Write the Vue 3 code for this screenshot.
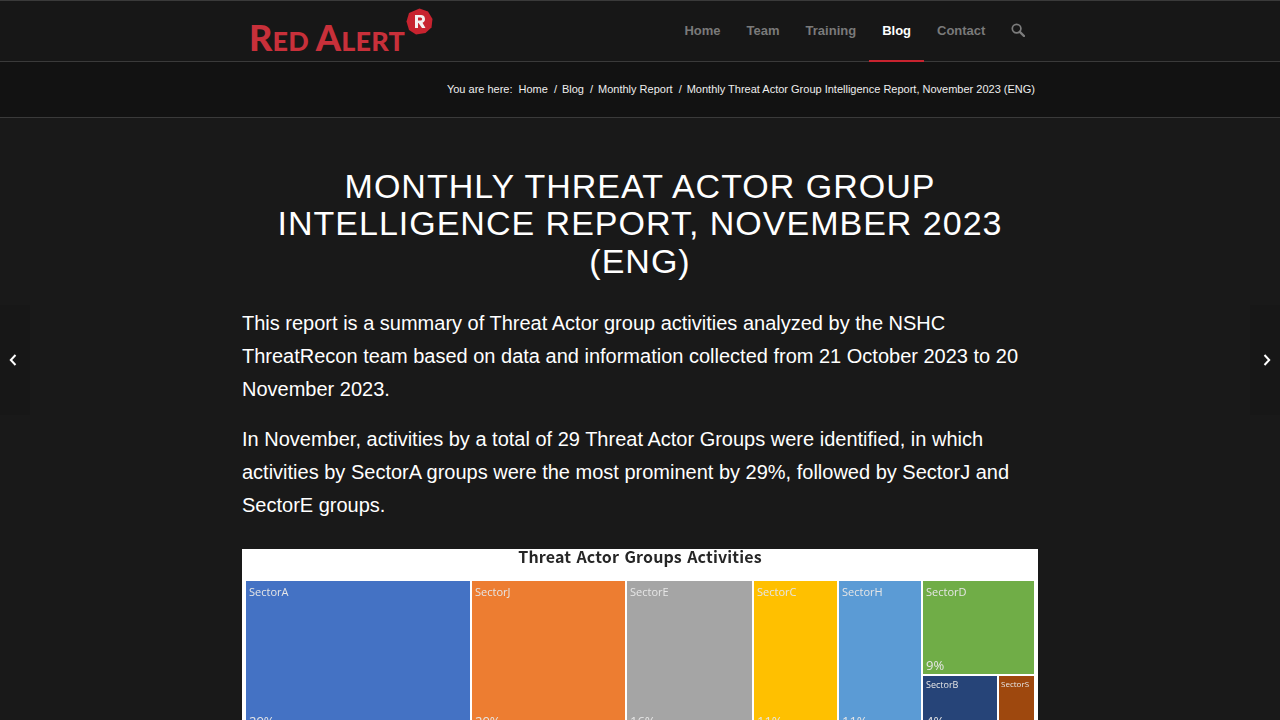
<script setup>
const navItems = [
  { label: 'Home' },
  { label: 'Team' },
  { label: 'Training' },
  { label: 'Blog', active: true },
  { label: 'Contact' },
]

const crumbs = ['Home', 'Blog', 'Monthly Report']

const columns = [
  { name: 'SectorA', pct: '29%', color: '#4472c4', width: 224 },
  { name: 'SectorJ', pct: '20%', color: '#ed7d31', width: 153 },
  { name: 'SectorE', pct: '16%', color: '#a5a5a5', width: 125 },
  { name: 'SectorC', pct: '11%', color: '#ffc000', width: 83 },
  { name: 'SectorH', pct: '11%', color: '#5b9bd5', width: 82 },
]
</script>

<template>
  <div class="page">
    <header class="topbar">
      <div class="topbar-inner">
        <a class="logo">
          <span class="logo-text"><span class="big">R</span>ED <span class="big">A</span>LERT</span>
          <svg class="logo-badge" width="27" height="27" viewBox="0 0 27 27">
            <path d="M13.5 0.5 L22 3.5 L26.5 11 L25.5 19.5 L19.5 25 L10 26.5 L3 22 L0.5 13.5 L3 5 Z" fill="#c8232f" />
            <path d="M9 20V7h6a4 4 0 0 1 1.5 7.7L19.5 20H16l-3.5-5H12v5z" fill="#f4f0f0" />
            <path d="M12 9.5v3h2.6a1.5 1.5 0 0 0 0-3z" fill="#c8232f" />
          </svg>
        </a>
        <nav class="nav">
          <a v-for="item in navItems" :key="item.label" class="nav-link" :class="{ active: item.active }">{{ item.label }}</a>
          <a class="nav-search">
            <svg width="14" height="14" viewBox="0 0 14 14" fill="none" stroke="#7c7c7c">
              <circle cx="5.6" cy="5.6" r="4.3" stroke-width="1.7" />
              <path d="M8.8 8.8 L13 13" stroke-width="2.4" stroke-linecap="round" />
            </svg>
          </a>
        </nav>
      </div>
    </header>

    <div class="crumbbar">
      <div class="crumbs">
        <span class="crumb-lead">You are here:</span>
        <template v-for="c in crumbs" :key="c">
          <a>{{ c }}</a>
          <span class="sep">/</span>
        </template>
        <a>Monthly Threat Actor Group Intelligence Report, November 2023 (ENG)</a>
      </div>
    </div>

    <main class="content">
      <h1 class="title">Monthly Threat Actor Group Intelligence Report, November 2023 (ENG)</h1>
      <p>This report is a summary of Threat Actor group activities analyzed by the NSHC ThreatRecon team based on data and information collected from 21 October 2023 to 20 November 2023.</p>
      <p>In November, activities by a total of 29 Threat Actor Groups were identified, in which activities by SectorA groups were the most prominent by 29%, followed by SectorJ and SectorE groups.</p>

      <figure class="chart">
        <div class="chart-title">Threat Actor Groups Activities</div>
        <div class="treemap">
          <div
            v-for="col in columns"
            :key="col.name"
            class="cell"
            :style="{ width: col.width + 'px', background: col.color }"
          >
            <span>{{ col.name }}</span>
            <span class="pct">{{ col.pct }}</span>
          </div>
          <div class="stack">
            <div class="cell green">
              <span>SectorD</span>
              <span class="pct">9%</span>
            </div>
            <div class="stack-row">
              <div class="cell small navy">
                <span>SectorB</span>
                <span class="pct">4%</span>
              </div>
              <div class="cell small brown">
                <span>SectorS</span>
              </div>
            </div>
          </div>
        </div>
      </figure>
    </main>

    <a class="side-tab left">
      <svg width="8" height="12" viewBox="0 0 8 12" fill="none" stroke="#fff" stroke-width="2"><path d="M6.5 1 L1.8 6 L6.5 11" /></svg>
    </a>
    <a class="side-tab right">
      <svg width="8" height="12" viewBox="0 0 8 12" fill="none" stroke="#fff" stroke-width="2"><path d="M1.5 1 L6.2 6 L1.5 11" /></svg>
    </a>
  </div>
</template>

<style>
html, body {
  margin: 0;
  background: #191919;
  overflow: hidden;
}
</style>

<style scoped>
.page {
  position: relative;
  height: 720px;
  overflow: hidden;
  background: #191919;
  color: #fff;
  font-family: "Liberation Sans", Arial, sans-serif;
}
.topbar {
  height: 60px;
  background: #171717;
  border-top: 1px solid #3a3a3a;
  border-bottom: 1px solid #3a3a3a;
}
.topbar-inner {
  width: 796px;
  height: 60px;
  margin: 0 auto;
  display: flex;
  justify-content: space-between;
}
.logo {
  display: flex;
  align-items: flex-start;
  margin-left: 7px;
  color: #c8303a;
}
.logo-text {
  font-family: Lato, "Liberation Sans", sans-serif;
  font-weight: 900;
  font-size: 27px;
  line-height: 30px;
  margin-top: 21px;
  letter-spacing: 0.2px;
  white-space: nowrap;
}
.logo-text .big {
  font-size: 36px;
}
.logo-badge {
  margin-left: 1px;
  margin-top: 7px;
}
.nav {
  display: flex;
  height: 61px;
  margin-right: 0.6px;
}
.nav-link {
  padding: 0 13px;
  min-width: 0;
  line-height: 60px;
  font-size: 13px;
  font-weight: 700;
  color: #7a7a7a;
  border-bottom: 2px solid transparent;
  box-sizing: border-box;
  height: 61px;
}
.nav-link.active {
  color: #fff;
  border-bottom-color: #c8232f;
}
.nav-search {
  width: 39px;
  margin-left: 0;
  padding-top: 22px;
  padding-left: 13px;
  box-sizing: border-box;
}
.crumbbar {
  height: 55px;
  background: #121212;
  border-bottom: 1px solid #3a3a3a;
}
.crumbs {
  width: 796px;
  margin: 0 auto;
  padding-right: 3px;
  box-sizing: border-box;
  display: flex;
  justify-content: flex-end;
  line-height: 55px;
  font-size: 11px;
  color: #eee;
  white-space: nowrap;
}
.crumb-lead {
  margin-right: 6px;
}
.sep {
  margin: 0 5px 0 6px;
}
.content {
  width: 796px;
  margin: 0 auto;
  padding-top: 50px;
}
.title {
  margin: 0 0 27px;
  font-size: 34px;
  line-height: 37.4px;
  font-weight: 400;
  letter-spacing: 1px;
  text-align: center;
  text-transform: uppercase;
  color: #fff;
}
p {
  margin: 0 0 17px;
  font-size: 20px;
  line-height: 33px;
  color: #fff;
}
.chart {
  margin: 27px 0 0;
  background: #fff;
  height: 200px;
  padding: 0 4px;
}
.chart-title {
  height: 32px;
  line-height: 14px;
  text-align: center;
  font-family: "Noto Sans CJK KR", "Open Sans", sans-serif;
  font-weight: 700;
  font-size: 16px;
  letter-spacing: 0.15px;
  word-spacing: 1.5px;
  color: #262626;
  filter: blur(0.3px);
}
.treemap {
  display: flex;
  gap: 2px;
  height: 154px;
}
.cell {
  display: flex;
  flex-direction: column;
  justify-content: space-between;
  box-sizing: border-box;
  padding: 3px 3px 6px;
  font-family: "Open Sans", sans-serif;
  font-size: 11px;
  line-height: 15px;
  color: #e6e6e6;
  filter: blur(0.25px);
}
.pct {
  font-size: 13px;
  line-height: 16px;
}
.stack {
  width: 111px;
  display: flex;
  flex-direction: column;
  gap: 2px;
}
.green {
  height: 93px;
  background: #70ad47;
  padding-bottom: 1px;
}
.stack-row {
  flex: 1;
  display: flex;
  gap: 2px;
}
.small {
  font-size: 9px;
  line-height: 12px;
  padding: 3px 3px 6px;
}
.navy {
  width: 74px;
  background: #264478;
}
.brown {
  width: 35px;
  background: #9e480e;
  font-size: 8px;
  padding: 2px 2px 6px;
}
.side-tab {
  position: absolute;
  top: 305px;
  width: 30px;
  height: 110px;
  background: #171717;
  display: flex;
  align-items: center;
}
.side-tab.left {
  left: 0;
  padding-left: 9px;
  box-sizing: border-box;
}
.side-tab.right {
  right: 0;
  justify-content: flex-end;
  padding-right: 9px;
  box-sizing: border-box;
}
</style>
